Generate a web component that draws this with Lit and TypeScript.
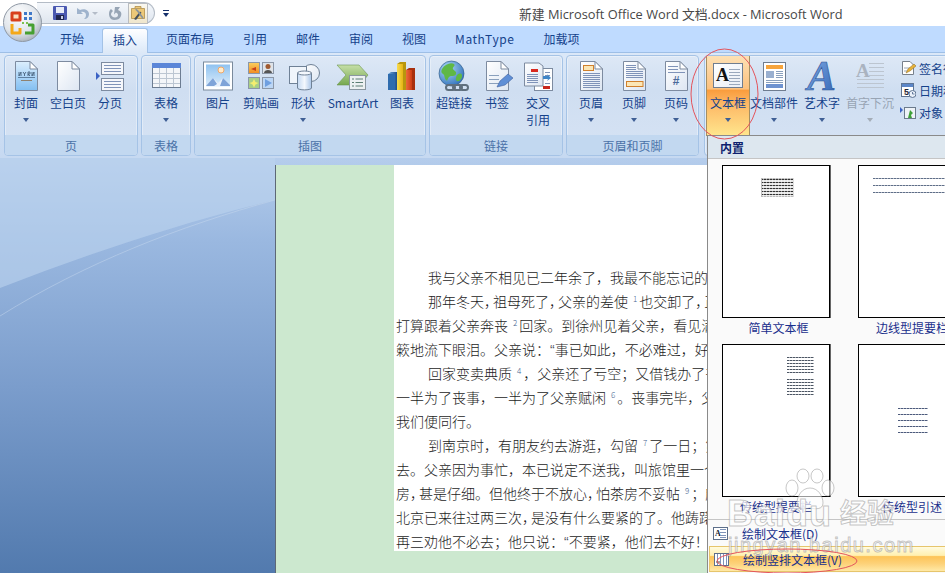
import { LitElement, html, css, svg, nothing } from "lit";
import { customElement } from "lit/decorators.js";

const S = "#7d8ba0";
const page = (fill: string, extra: unknown = nothing) => svg`
  <path d="M5.5 .5H20L27.5 8V29.5H5.5Z" fill="${fill}" stroke="${S}"/>
  <path d="M20 .5V8H27.5Z" fill="#fff" stroke="${S}"/>${extra}`;
const lines = (x1: number, x2: number, ys: number[], c = "#7f93b8") =>
  svg`${ys.map((y) => svg`<path d="M${x1} ${y + 0.5}H${x2}" stroke="${c}"/>`)}`;

const icons: Record<string, unknown> = {
  cover: page("url(#gCover)", svg`<path d="M9 11v4l2-4v4M13 11l1.5 2 1.5-2M14.500 13v2M18 11v4M18 11h2v2h-2l2 2M22 11v4l2-4v4" fill="none" stroke="#46607c" stroke-width=".9"/>${lines(8, 25, [16], "#5f7f9f")}${lines(11, 22, [19], "#8f8270")}`),
  blank: page("url(#gPage)"),
  pbreak: svg`<path d="M2 11l4 4-4 4Z" fill="#3b62c4"/>
    <rect x="7.500" y="1.500" width="22" height="12" fill="#f5f7fb" stroke="${S}"/>${lines(10, 27, [4, 7, 10])}
    <rect x="7.500" y="17.500" width="22" height="12" fill="#f5f7fb" stroke="${S}"/>${lines(10, 27, [20, 23, 26])}`,
  table: svg`<rect x="2.500" y="2.500" width="28" height="24" fill="#f4f6f9" stroke="#6d7d92"/>
    <rect x="2" y="2" width="29" height="5" fill="#5b86d8"/>
    <path d="M9.500 7V26M16.500 7V26M23.500 7V26M3 12.500H30M3 17.500H30M3 22.500H30" stroke="#bcc6d2"/>`,
  picture: svg`<rect x="1.500" y="1" width="29" height="28" fill="#fff" stroke="#7a8a9c"/>
    <rect x="4" y="3.500" width="24" height="22" fill="url(#gSky)"/>
    <circle cx="19" cy="9" r="3" fill="#ffeccc" stroke="#f2a868"/>
    <path d="M4 25l7-8 5 5 5-5 7 7v1Z" fill="#e8f0fa"/><path d="M4 25l7-8 4 6-3 2ZM18 25l3-8 7 7v1Z" fill="#7fa4d8"/>`,
  clip: svg`<rect x="3.500" y="1.500" width="11" height="11" fill="url(#gOr)" stroke="#8b97a8"/><path d="M6 8l5-2v4Z" fill="#c8401a"/>
    <rect x="17.500" y="1.500" width="11" height="11" fill="#dfe3e8" stroke="#8b97a8"/><circle cx="23" cy="5.500" r="2.500" fill="#a05a30"/><path d="M19 12c0-4 8-4 8 0Z" fill="#555"/>
    <rect x="3.500" y="16.500" width="11" height="11" fill="#a9cf86" stroke="#8b97a8"/><path d="M9 18l1.500 3 3 1-3 1.500-1.500 3-1.500-3-3-1.500 3-1Z" fill="#f4ee70"/>
    <rect x="17.500" y="16.500" width="11" height="11" fill="#bcd6f5" stroke="#8b97a8"/><path d="M20 18l7 4-7 4Z" fill="#6f9fe0"/>`,
  shapes: svg`<circle cx="24" cy="12" r="8.500" fill="url(#gPage)" stroke="#6f8196"/>
    <rect x="2.500" y="5.500" width="17" height="17" fill="#f0f5fb" stroke="#6f8196"/>
    <path d="M10.500 12v15c0 2.500 14 2.500 14 0V12Z" fill="url(#gCyl)" stroke="#6f8196"/><ellipse cx="17.500" cy="12" rx="7" ry="2" fill="#f4f8fd" stroke="#6f8196"/>`,
  smart: svg`<path d="M0 4H22L31 14 23 24H0L9 14Z" fill="url(#gGreen)" stroke="#6d9550" stroke-width=".6"/>
    <rect x="12.500" y="14.500" width="16" height="14" fill="#edf1f2" stroke="#8a97a0"/>
    <path d="M15 18h2M18.500 18H26M15 21.500h2M18.500 21.500H26M15 25h2M18.500 25H26" stroke="#5d7f74"/>`,
  chart: svg`<path d="M2 13l3-2h6v18H2Z" fill="url(#gB)"/><path d="M2 13h7v16H2Z" fill="#2f6cae"/>
    <path d="M11 3l3-2h6v28h-9Z" fill="#b8960e"/><path d="M11 3h6v26h-6Z" fill="url(#gY)"/>
    <path d="M20 9l3-2h6v22h-9Z" fill="#a8300e"/><path d="M20 9h6v20h-6Z" fill="url(#gR)"/>`,
  globe: svg`<circle cx="13.500" cy="12.500" r="12.500" fill="url(#gGlobe)" stroke="#27507d" stroke-width=".6"/>
    <path d="M4 8c3-5 9-7 12-5 2 2-2 3-1 5s4 2 3 5-5 1-7 3-1 5-3 3-1-5-3-6-2-3-1-5ZM19 14c3-2 5-2 5 1s-3 6-5 5-1-4 0-6Z" fill="#5fb846"/>
    <g fill="none" stroke="#5f6f7d" stroke-width="2"><rect x="8" y="24" width="9" height="5" rx="2.500"/><rect x="15" y="24" width="9" height="5" rx="2.500"/><rect x="22" y="24" width="8" height="5" rx="2.500"/></g>`,
  bookmark: svg`${page("url(#gPage)", lines(8, 18, [14, 18, 22], "#8aa0bd"))}
    <path d="M16 26l3-6 8-7 5 4-8 7Z" fill="#5f8fd6" stroke="#3f62a0" stroke-width=".6"/>`,
  cross: svg`<rect x="12.500" y="7.500" width="18" height="22" fill="#fff" stroke="${S}"/><rect x="21" y="25" width="7" height="3" fill="#c8281e"/>${lines(23, 28, [11, 14, 22])}
    <path d="M2.500 2H17L21 5V25H2.500Z" fill="url(#gPage)" stroke="${S}"/><rect x="9" y="8" width="7" height="3" fill="#d8281e"/>${lines(5, 16, [13, 15, 17, 19, 21])}
    <path d="M21 15h5l-1-2 4 4-4 3 1-2h-5Z" fill="#3f86c8"/>`,
  header: page("url(#gPage)", svg`<rect x="8.500" y="4.500" width="10" height="5" fill="#fbe6b5" stroke="#d0802c"/>${lines(8, 25, [12, 14, 16, 18, 20, 22, 24, 26])}`),
  footer: page("url(#gPage)", svg`${lines(8, 18, [4, 6, 8])}${lines(8, 25, [10, 12, 14, 16])}<rect x="8.500" y="20.500" width="16.500" height="5" fill="#fbe6b5" stroke="#d0802c"/>`),
  pagenum: page("url(#gPage)", svg`${lines(8, 18, [5, 8])}${lines(8, 25, [11])}<text x="16" y="24" text-anchor="middle" class="svgnum">#</text>`),
  textbox: svg`<rect x="1.500" y="2.500" width="29" height="24" fill="url(#gBox)" stroke="#6f7d90"/><text x="4" y="20" class="svgA">A</text>${lines(17, 28, [8, 11, 14, 17, 20, 23], "#9aa8bc")}`,
  parts: svg`<rect x="5.500" y="1.500" width="22" height="28" fill="#fff" stroke="#6f7d90"/><rect x="8" y="4" width="17" height="4" fill="#f6a43c"/>
    <rect x="8" y="10" width="8" height="7" fill="#9ab0d0"/>${lines(18, 25, [10, 12, 14, 16], "#8aa0bd")}${lines(8, 25, [19, 21], "#8aa0bd")}<rect x="8" y="23" width="17" height="4" fill="#6f93d0"/>`,
  wordart: svg`<text x="15.500" y="29" text-anchor="middle" class="svgArt" fill="url(#gArt)">A</text>`,
  dropcap: svg`<text x="2" y="16" class="svgDrop">A</text>${lines(15, 30, [2, 6, 10, 14], "#bcc5d0")}${lines(3, 30, [18, 22, 26], "#bcc5d0")}`,
};

const small: Record<string, unknown> = {
  sign: svg`<path d="M2.500 1.500H10L13.500 5V14.500H2.500Z" fill="#fff" stroke="#77808c"/><path d="M4 8h6M4 11h4" stroke="#9aa6b6"/><path d="M6 13l2-4 6-5 2 2-6 5Z" fill="#e8b23a" stroke="#8a6a20" stroke-width=".5"/>`,
  date: svg`<rect x="1.500" y="1.500" width="12" height="13" fill="#fff" stroke="#5f7594"/><rect x="2" y="2" width="11" height="3" fill="#5b86c8"/><text x="4" y="13" class="svgDate">5</text><circle cx="12.500" cy="12" r="3.500" fill="#eaf1fa" stroke="#5f7594"/><path d="M12.500 10v2h2" stroke="#35507a" fill="none" stroke-width=".7"/>`,
  obj: svg`<path d="M0 3l3 3-3 3Z" fill="#3b62c4"/><rect x="4.500" y="3.500" width="11" height="11" fill="#eef2f7" stroke="#6b7a8c"/><path d="M8 14l2-8 3 3-2 2 1 3Z" fill="#3fa03a"/>`,
  drawH: svg`<rect x=".5" y=".5" width="14" height="12" fill="#fff" stroke="#5d6f8a"/><text x="2" y="9" class="svgMini">A</text>${lines(7, 13, [2, 5, 8, 10], "#7f93b8")}`,
  drawV: svg`<rect x=".5" y=".5" width="14" height="12" fill="#fff" stroke="#5d6f8a"/>${[3, 6, 9, 12].map((x) => svg`<path d="M${x + 0.5} 1V12" stroke="#7f93b8"/>`)}<path d="M2 9h4" stroke="#444"/>`,
};

const groups = [
  { name: "页", w: 134, btns: [["cover", "封面", 42, 1], ["blank", "空白页", 42, 0], ["pbreak", "分页", 42, 0]] },
  { name: "表格", w: 50, btns: [["table", "表格", 48, 1]] },
  { name: "插图", w: 232, btns: [["picture", "图片", 46, 0], ["clip", "剪贴画", 40, 0], ["shapes", "形状", 44, 1], ["smart", "SmartArt", 56, 0], ["chart", "图表", 42, 0]] },
  { name: "链接", w: 134, btns: [["globe", "超链接", 48, 0], ["bookmark", "书签", 38, 0], ["cross", "交叉|引用", 44, 0]] },
  { name: "页眉和页脚", w: 133, btns: [["header", "页眉", 48, 1], ["footer", "页脚", 38, 1], ["pagenum", "页码", 46, 1]] },
] as const;

const textBtns = [
  ["textbox", "文本框", 42, 1, "hot"],
  ["parts", "文档部件", 50, 1, ""],
  ["wordart", "艺术字", 46, 1, ""],
  ["dropcap", "首字下沉", 50, 1, "off"],
] as const;

const tabs = ["开始", "插入", "页面布局", "引用", "邮件", "审阅", "视图", "MathType", "加载项"];

const docLines: [string, boolean][] = [
  ["我与父亲不相见已二年余了，我最不能忘记的是他的背影。", true],
  ["那年冬天<t>，</t>祖母死了<t>，</t>父亲的差使<s>1</s>也交卸了<t>，</t>正是祸不单行的日子", true],
  ["打算跟着父亲奔丧<s>2</s>回家。到徐州见着父亲，看见满院狼藉的东西", false],
  ["簌地流下眼泪。父亲说：<q>“</q>事已如此，不必难过，好在天无绝人之路", false],
  ["回家变卖典质<s>4</s>，父亲还了亏空；又借钱办了丧事。", true],
  ["一半为了丧事，一半为了父亲赋闲<s>6</s>。丧事完毕，父亲要到南京谋事", false],
  ["我们便同行。", false],
  ["到南京时，有朋友约去游逛，勾留<s>7</s>了一日；第二日上午便须渡江", true],
  ["去。父亲因为事忙，本已说定不送我，叫旅馆里一个熟识的茶房陪我", false],
  ["房<t>，</t>甚是仔细。但他终于不放心<t>，</t>怕茶房不妥帖<s>9</s>；颇踌躇了一会", false],
  ["北京已来往过两三次<t>，</t>是没有什么要紧的了。他踌躇了一会", false],
  ["再三劝他不必去；他只说：<q>“</q>不要紧，他们去不好！", false],
];

@customElement("app-root")
export class AppRoot extends LitElement {
  static styles = css`
    :host { display: block; position: relative; width: 945px; height: 573px; overflow: hidden; font-family: "Noto Sans CJK SC", "Noto Sans", sans-serif; font-size: 12px; color: #15428b; background: #fff; }
    .app { display: flex; flex-direction: column; height: 573px; }
    .defs { position: absolute; width: 0; height: 0; }

    .title { height: 26px; flex: none; display: flex; align-items: center; background: #fff; padding-left: 37px; }
    .qat { width: 118px; height: 22px; box-sizing: border-box; flex: none; display: flex; align-items: center; padding-left: 16px; background: linear-gradient(#f4f7fb, #dfe6ef); border: 1px solid #b4bcc6; border-left: none; border-radius: 0 12px 12px 0; }
    .qat svg { display: block; flex: none; }
    .qsave { margin-right: 9px; }
    .qundo { margin-right: 2px; }
    .qdrop { width: 0; height: 0; border: 3px solid transparent; border-top: 3px solid #b4bcc8; border-bottom: 0; margin-right: 10px; }
    .qredo { margin-right: 6px; }
    .qtool { width: 20px; height: 21px; box-sizing: border-box; border: 1px solid #b9bcc0; background: linear-gradient(#faf8f0, #efe6cc); display: flex; align-items: center; justify-content: center; }
    .qcust { margin-left: 8px; width: 6px; flex: none; }
    .qcust i { display: block; height: 1px; background: #15306b; margin-bottom: 2px; }
    .qcust b { display: block; width: 0; height: 0; border: 3px solid transparent; border-top: 4px solid #15306b; border-bottom: 0; }
    .wintitle { margin-left: 350px; font-family: "Open Sans", "Noto Sans CJK SC", sans-serif; font-size: 12.800px; color: #474747; white-space: nowrap; }

    .office { position: absolute; left: 3px; top: 3px; width: 39px; height: 39px; }

    .tabs { height: 27px; flex: none; box-sizing: border-box; display: flex; gap: 7px; padding: 2px 0 0 49px; background: #bfdbff; }
    .tab { height: 25px; box-sizing: border-box; padding: 0 11px; line-height: 21px; font-size: 12px; color: #15428b; white-space: nowrap; }
    .tab.on { background: linear-gradient(#fefeff, #e8f1fc 60%, #dce8f7); border: 1px solid #a3c2e6; border-bottom: none; border-radius: 3px 3px 0 0; padding: 0 10px; position: relative; z-index: 1; }
    .tab.latin { letter-spacing: .55px; }

    .ribbon { height: 106px; flex: none; box-sizing: border-box; display: flex; gap: 3px; padding: 2px 0 2px 4px; overflow: hidden; background: linear-gradient(#dbe8f8, #c6d9f1); border-top: 1px solid #9ebfe6; margin-top: -1px; }
    .group { height: 101px; flex: none; box-sizing: border-box; display: flex; flex-direction: column; border: 1px solid #a5c3e6; border-radius: 4px; overflow: hidden; background: linear-gradient(#dde8f6, #cfdef1 35%, #d6e3f4); box-shadow: inset 0 0 0 1px rgba(255,255,255,.35); }
    .gbody { flex: 1; display: flex; padding-left: 0; min-height: 0; }
    .glabel { height: 20px; flex: none; background: #c2d8f0; color: #4b72a8; font-size: 12px; line-height: 22px; text-align: center; }
    .btn { flex: none; height: 79px; box-sizing: border-box; padding-top: 5px; display: flex; flex-direction: column; align-items: center; }
    .btn svg { display: block; flex: none; overflow: visible; }
    .btn .lb { line-height: 17px; height: 17px; white-space: nowrap; }
    .btn .first { margin-top: 1px; }
    .chev { margin-top: 7px; width: 0; height: 0; border: 3.500px solid transparent; border-top: 4px solid #3f5f95; border-bottom: 0; }
    .btn.hot { background: linear-gradient(#fde0b4, #fcc17e 42%, #fa9c3c 43%, #fdb765 60%, #ffe58c); box-shadow: 0 0 0 1px #a48f63; position: relative; }
    .btn.off .lb { color: #98a4b4; }
    .btn.off .chev { border-top-color: #a4adb8; }
    .tgroup { margin-left: 2px; width: 270px; }
    .tbody { padding-left: 2px; }
    .minis { display: flex; flex-direction: column; padding: 1px 0 0 5px; }
    .mini { height: 22px; display: flex; align-items: center; gap: 3px; white-space: nowrap; }
    .mini svg { flex: none; display: block; }

    .work { flex: 1; position: relative; min-height: 0; display: flex; overflow: hidden; background: linear-gradient(#b5cdec, #9ab8e0 20%, #7b9dcc 55%, #527aae); }
    .swoosh { position: absolute; left: 0; top: 0; width: 275px; height: 170px; }
    .paper { position: relative; margin: 7px 0 0 275px; flex: 1; border-left: 1px solid #5d6876; background: #cce8cf; padding-left: 118px; min-width: 0; }
    .sheet { width: 330px; height: 386px; box-sizing: border-box; background: #fff; padding: 100px 0 0 2px; overflow: hidden; font-size: 14px; line-height: 24px; color: #1c1c1c; font-weight: 300; }
    .ln { white-space: nowrap; height: 24px; }
    .ln.ind { padding-left: 32px; }
    .ln sup { font-size: 8px; color: #44648f; line-height: 0; margin: 0 2px 0 5px; vertical-align: 5px; }
    .ln .t { letter-spacing: -5px; }
    .ln .q { font-family: "Liberation Sans", sans-serif; color: #556; }

    .menu { position: absolute; left: 707px; top: 135px; width: 240px; height: 440px; box-sizing: border-box; border: 1px solid #8a8a8a; background: #fafafa; display: flex; flex-direction: column; }
    .mhead { height: 23px; flex: none; box-sizing: border-box; background: #dde7ef; border-bottom: 1px solid #c5c5c5; padding-left: 12px; line-height: 23px; font-weight: 700; color: #0f1f6e; font-size: 12px; }
    .grid { flex: none; display: grid; grid-template-columns: 108px 108px; grid-template-rows: 179px 175px; column-gap: 28px; padding: 6px 0 0 14px; height: 360px; box-sizing: border-box; }
    .cell { display: flex; flex-direction: column; align-items: stretch; }
    .thumb { height: 153px; box-sizing: border-box; border: 1px solid #000; background: #fff; box-shadow: 1px 0 0 #666; display: flex; flex-direction: column; flex: none; }
    .cap { height: 26px; line-height: 20px; text-align: center; color: #1a2f8c; white-space: nowrap; font-size: 12px; }
    .cap.sh { padding-left: 5px; }
    .cell.r2 .cap { height: 22px; line-height: 20px; }
    .tx { background: repeating-linear-gradient(#4c5664 0 1.500px, transparent 1.500px 3px); -webkit-mask-image: repeating-linear-gradient(90deg, #000 0 2px, rgba(0,0,0,.5) 2px 3px); }
    .t1 { margin: 12px 0 0 38px; width: 31px; height: 17px; border: 1px solid #bbb; background-color: #e6e6e6; background-image: repeating-linear-gradient(#333 0 1.500px, transparent 1.500px 3px); }
    .t2 { margin: 12px 0 0 14px; width: 100px; height: 16px; background: repeating-linear-gradient(#5f6e88 0 1px, transparent 1px 7px); }
    .t3 { margin: 12px 0 0 64px; width: 27px; height: 17px; }
    .t3b { margin: 5px 0 0 64px; width: 27px; height: 17px; }
    .t4 { margin: 63px 0 0 39px; width: 30px; height: 26px; background: repeating-linear-gradient(#4c5a7c 0 1.500px, transparent 1.500px 6px); }
    .item { height: 24px; flex: none; display: flex; align-items: center; padding-left: 5px; gap: 14px; white-space: nowrap; color: #16308c; font-size: 12px; box-sizing: border-box; }
    .item svg { display: block; flex: none; }
    .item.sep { border-top: 1px solid #c5c5c5; margin-top: 0; height: 26px; padding-top: 2px; }
    .item.act { height: 26px; margin: 1px 0 0 1px; padding-left: 4px; border: 1px solid #e6c56c; background: linear-gradient(#fffbe0, #fff0b0 35%, #fdc458 40%, #fdd27a 70%, #ffe9a6); }

    .marks { position: absolute; left: 0; top: 0; width: 945px; height: 573px; pointer-events: none; }
    .wm { position: absolute; left: 0; top: 0; width: 945px; height: 573px; pointer-events: none; overflow: hidden; }
    .wmt { position: absolute; white-space: nowrap; color: rgba(255,255,255,.7); -webkit-text-stroke: 1px rgba(130,130,130,.45); font-family: "Liberation Sans", sans-serif; font-weight: 700; }
    .wm1 { left: 727px; top: 495px; font-size: 36px; line-height: 38px; letter-spacing: 1px; }
    .wm2 { left: 840px; top: 492px; font-size: 27px; line-height: 40px; font-family: "Noto Sans CJK SC", sans-serif; }
    .wm3 { left: 728px; top: 533px; font-size: 20px; line-height: 24px; font-weight: 400; letter-spacing: 1.500px; }
    .wmpaw { position: absolute; left: 783px; top: 468px; width: 52px; height: 44px; }

    .svgA { font: 700 18px "Liberation Serif", serif; fill: #111; }
    .svgArt { font: italic 700 43px "Liberation Serif", serif; stroke: #2f5597; stroke-width: .6px; }
    .svgDrop { font: 700 19px "Liberation Serif", serif; fill: #aab3c0; }
    .svgnum { font: 700 12px "Liberation Sans", sans-serif; fill: #4a6a9a; }
    .svgDate { font: 700 9px "Liberation Sans", sans-serif; fill: #223; }
    .svgMini { font: 700 8px "Liberation Serif", serif; fill: #123; }
  `;

  private btn(icon: string, label: string, w: number, chev: unknown, cls = "") {
    const ls = label.split("|");
    return html`<div class="btn ${cls}" style="width:${w}px">
      <svg width="32" height="32" viewBox="0 0 32 32">${icons[icon]}</svg>
      ${ls.map((l, i) => html`<div class="lb ${i === 0 ? "first" : ""}">${l}</div>`)}
      ${chev ? html`<div class="chev"></div>` : nothing}
    </div>`;
  }

  private docLine(t: string) {
    const parts = t.split(/(<s>.*?<\/s>|<t>.*?<\/t>|<q>.*?<\/q>)/);
    return parts.map((p) => {
      if (p.startsWith("<s>")) return html`<sup>${p.slice(3, -4)}</sup>`;
      if (p.startsWith("<t>")) return html`<span class="t">${p.slice(3, -4)}</span>`;
      if (p.startsWith("<q>")) return html`<span class="q">${p.slice(3, -4)}</span>`;
      return p;
    });
  }

  render() {
    return html`
      <svg class="defs" aria-hidden="true"><defs>
        <linearGradient id="gCover" x1="0" y1="0" x2="0" y2="1"><stop offset="0" stop-color="#dceefd"/><stop offset="1" stop-color="#82bff2"/></linearGradient>
        <linearGradient id="gPage" x1="0" y1="0" x2="1" y2="1"><stop offset="0" stop-color="#fff"/><stop offset="1" stop-color="#dde6f2"/></linearGradient>
        <linearGradient id="gBox" x1="0" y1="0" x2="1" y2="1"><stop offset="0" stop-color="#fff"/><stop offset="1" stop-color="#e8edf4"/></linearGradient>
        <linearGradient id="gSky" x1="0" y1="0" x2="0" y2="1"><stop offset="0" stop-color="#8fc2f0"/><stop offset="1" stop-color="#dcedfb"/></linearGradient>
        <linearGradient id="gOr" x1="0" y1="0" x2="0" y2="1"><stop offset="0" stop-color="#fbd060"/><stop offset="1" stop-color="#f08a20"/></linearGradient>
        <linearGradient id="gCyl" x1="0" y1="0" x2="1" y2="0"><stop offset="0" stop-color="#c4d9f2"/><stop offset=".5" stop-color="#f4f8fd"/><stop offset="1" stop-color="#a9c5e8"/></linearGradient>
        <linearGradient id="gGreen" x1="0" y1="0" x2="0" y2="1"><stop offset="0" stop-color="#c6dfa8"/><stop offset="1" stop-color="#76a84f"/></linearGradient>
        <linearGradient id="gB" x1="0" y1="0" x2="1" y2="0"><stop offset="0" stop-color="#6fa8dc"/><stop offset="1" stop-color="#1f4f8c"/></linearGradient>
        <linearGradient id="gY" x1="0" y1="0" x2="1" y2="0"><stop offset="0" stop-color="#f8dc50"/><stop offset="1" stop-color="#e6b414"/></linearGradient>
        <linearGradient id="gR" x1="0" y1="0" x2="1" y2="0"><stop offset="0" stop-color="#ec6a3c"/><stop offset="1" stop-color="#cc3c14"/></linearGradient>
        <radialGradient id="gGlobe" cx=".35" cy=".3" r=".8"><stop offset="0" stop-color="#afdaf8"/><stop offset="1" stop-color="#2a6cb8"/></radialGradient>
        <linearGradient id="gArt" x1="0" y1="0" x2="1" y2="1"><stop offset="0" stop-color="#8ab4ea"/><stop offset="1" stop-color="#2f62b4"/></linearGradient>
        <radialGradient id="gOrb" cx=".4" cy=".3" r=".8"><stop offset="0" stop-color="#fff"/><stop offset=".6" stop-color="#dfe4ea"/><stop offset="1" stop-color="#9aa4b0"/></radialGradient>
      </defs></svg>

      <div class="app">
        <div class="title">
          <div class="qat">
            <svg class="qsave" width="14" height="14" viewBox="0 0 14 14"><rect width="14" height="14" rx="1" fill="#4a58b0"/><rect x="3" y="1" width="8" height="6" fill="#e8ecf8"/><rect x="3" y="9" width="8" height="5" fill="#20264e"/><rect x="8" y="10" width="2" height="3" fill="#c9cfe8"/></svg>
            <svg class="qundo" width="14" height="14" viewBox="0 0 14 14"><path d="M1 2v6h6L5 6c3-1 5 1 5 3 0 2-1 3-2 4 3 0 5-2 5-5 0-4-5-6-9-4Z" fill="#9fb3cc"/></svg>
            <div class="qdrop"></div>
            <svg class="qredo" width="14" height="14" viewBox="0 0 14 14"><path d="M7 1l5 0-2 3c3 1 4 3 3 6s-4 4-7 4-5-3-5-6 1-4 2-5l2 2C4 6 3 7 3 8.500s2 3 4 3 3-1 3-2.500-1-2-2-2.500L6 8.500Z" fill="#97a5b5"/></svg>
            <div class="qtool"><svg width="16" height="16" viewBox="0 0 16 16"><path d="M5 3V1.500h6V3M1.500 3.500h13v10h-13Z" fill="#ecc878" stroke="#a8843c" stroke-width=".7"/><path d="M4 14L10 6.500l1.500 1.200L6 15Z" fill="#46505a"/><path d="M12.500 14L7 6.500 5 4.500 6.500 4 8.500 5.500 13.500 12.500Z" fill="#8a949c"/></svg></div>
          </div>
          <div class="qcust"><i></i><b></b></div>
          <div class="wintitle">新建 Microsoft Office Word 文档.docx - Microsoft Word</div>
        </div>

        <div class="tabs">
          ${tabs.map((t, i) => html`<div class="tab ${i === 1 ? "on" : ""} ${t === "MathType" ? "latin" : ""}">${t}</div>`)}
        </div>

        <div class="ribbon">
          ${groups.map((g) => html`<div class="group" style="width:${g.w}px">
            <div class="gbody">${g.btns.map((b) => this.btn(b[0], b[1], b[2], b[3]))}</div>
            <div class="glabel">${g.name}</div>
          </div>`)}
          <div class="group tgroup">
            <div class="gbody tbody">
              ${textBtns.map((b) => this.btn(b[0], b[1], b[2], b[3], b[4]))}
              <div class="minis">
                <div class="mini"><svg width="16" height="16" viewBox="0 0 16 16">${small.sign}</svg>签名行</div>
                <div class="mini"><svg width="16" height="16" viewBox="0 0 16 16">${small.date}</svg>日期和时间</div>
                <div class="mini"><svg width="16" height="16" viewBox="0 0 16 16">${small.obj}</svg>对象</div>
              </div>
            </div>
          </div>
        </div>

        <div class="work">
          <svg class="swoosh" viewBox="0 0 275 170" preserveAspectRatio="none">
            <path d="M0 0H275V42C180 65 90 95 0 130Z" fill="#bcd3ee" opacity=".6"/>
            <path d="M0 158C85 105 180 68 275 42" fill="none" stroke="#c6d8ee" stroke-opacity=".5"/>
          </svg>
          <div class="paper">
            <div class="sheet">
              ${docLines.map(([t, ind]) => html`<div class="ln ${ind ? "ind" : ""}">${this.docLine(t)}</div>`)}
            </div>
          </div>
        </div>
      </div>

      <svg class="office" viewBox="0 0 39 39">
        <circle cx="19.500" cy="19.500" r="19" fill="url(#gOrb)" stroke="#8f98a4"/>
        <g fill="none" stroke-width="3" stroke-linejoin="round">
          <path d="M9 17V10h8v7Z" stroke="#d8401c" fill="#f8e0c0"/>
          <path d="M9 21v9h8v-5" stroke="#f4a818"/>
          <path d="M22 30h8v-8h-5" stroke="#46a030"/>
        </g>
        <g fill="#3f78c8"><rect x="21" y="9" width="3" height="3"/><rect x="26" y="9" width="3" height="3"/><rect x="21" y="14" width="3" height="3"/><rect x="26" y="14" width="3" height="3"/></g>
        <g fill="#7cc050"><rect x="19" y="19" width="2" height="2"/><rect x="23" y="19" width="2" height="2"/></g>
      </svg>

      <div class="menu">
        <div class="mhead">内置</div>
        <div class="grid">
          <div class="cell"><div class="thumb"><div class="tx t1"></div></div><div class="cap sh">简单文本框</div></div>
          <div class="cell"><div class="thumb"><div class="tx t2"></div></div><div class="cap">边线型提要栏</div></div>
          <div class="cell r2"><div class="thumb"><div class="tx t3"></div><div class="tx t3b"></div></div><div class="cap">传统型提要栏</div></div>
          <div class="cell r2"><div class="thumb"><div class="tx t4"></div></div><div class="cap">传统型引述</div></div>
        </div>
        <div class="item sep"><svg width="15" height="13" viewBox="0 0 15 13">${small.drawH}</svg>绘制文本框(D)</div>
        <div class="item act"><svg width="15" height="13" viewBox="0 0 15 13">${small.drawV}</svg>绘制竖排文本框(V)</div>
      </div>

      <div class="wm">
        <svg class="wmpaw" viewBox="0 0 52 44"><g fill="rgba(255,255,255,.6)" stroke="rgba(130,130,130,.45)"><ellipse cx="9" cy="20" rx="6" ry="8"/><ellipse cx="20" cy="8" rx="6" ry="7"/><ellipse cx="34" cy="8" rx="6" ry="7"/><ellipse cx="45" cy="20" rx="6" ry="8"/><path d="M27 20c8 0 13 8 13 15 0 7-8 6-13 5-5 1-13 2-13-5 0-7 5-15 13-15Z"/></g></svg>
        <div class="wmt wm1">Baidu</div>
        <div class="wmt wm2">经验</div>
        <div class="wmt wm3">jingyan.baidu.com</div>
      </div>

      <svg class="marks" viewBox="0 0 945 573">
        <ellipse cx="724.500" cy="94" rx="33.500" ry="45" fill="none" stroke="#e4545c"/>
        <ellipse cx="787" cy="561" rx="70" ry="12" fill="none" stroke="#e4545c"/>
      </svg>
    `;
  }
}
